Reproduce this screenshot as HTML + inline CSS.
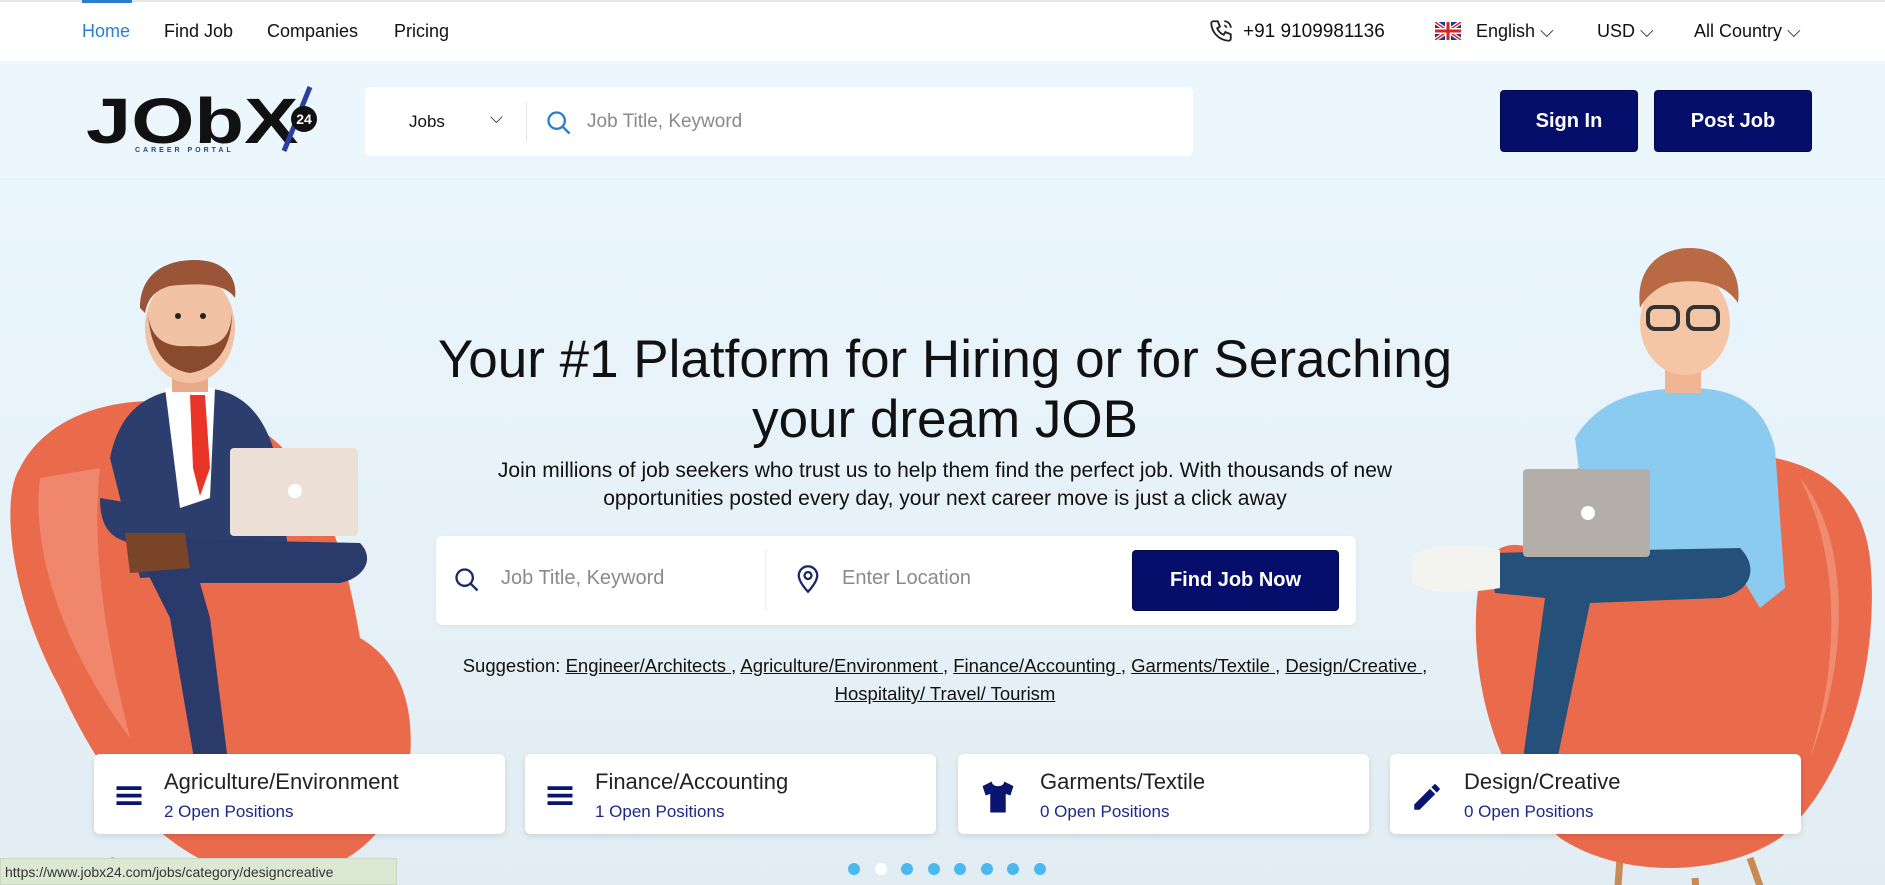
<!DOCTYPE html>
<html><head><meta charset="utf-8">
<style>
*{margin:0;padding:0;box-sizing:border-box}
html,body{overflow:hidden}
body{width:1885px;height:885px;font-family:"Liberation Sans",sans-serif;background:#eaf6fd;position:relative;color:#111}
.abs{position:absolute}
#top{left:0;top:0;width:1885px;height:61px;background:#fff;border-top:2px solid #e4e8e0}
.nav{top:21px;font-size:18px;color:#111}
#hdr{left:0;top:61px;width:1885px;height:119px;background:#ecf7fd;border-bottom:1px solid #e3eef5}
.btn{background:#050f6b;color:#fff;font-weight:bold;font-size:20px;border-radius:4px;display:flex;align-items:center;justify-content:center;border:1px solid #000a4a}
.card{top:754px;height:80px;width:411px;background:#fff;border-radius:6px;box-shadow:0 2px 6px rgba(0,0,0,.12)}
.card .t{position:absolute;left:70px;top:15px;font-size:22px;color:#222}
.card .s{position:absolute;left:70px;top:48px;font-size:17px;color:#1a2a8a}
.card svg{position:absolute;left:20px;top:26px}
.dot{top:863px;width:12px;height:12px;border-radius:50%;background:#4bb8ee}
u{text-decoration:underline}
</style></head><body>
<svg class="abs" style="left:0;top:180px" width="1885" height="705">
<defs>
<linearGradient id="fl" x1="0" y1="0" x2="0" y2="1"><stop offset="0" stop-color="#eaf6fd"/><stop offset="1" stop-color="#e2edf3"/></linearGradient>
</defs>
<rect width="1885" height="705" fill="url(#fl)"/>
<g transform="translate(0,58)">
<line x1="115" y1="620" x2="75" y2="760" stroke="#c98a55" stroke-width="7"/>
<line x1="180" y1="640" x2="165" y2="760" stroke="#c98a55" stroke-width="7"/>
<line x1="305" y1="630" x2="345" y2="760" stroke="#c98a55" stroke-width="7"/>
<path d="M20 230 C0 260 10 360 60 450 C110 560 170 620 250 640 C330 650 400 600 410 520 C415 460 395 420 360 400 C340 280 300 180 190 165 C110 155 45 180 20 230Z" fill="#ea6a4c"/>
<path d="M40 240 C30 320 70 420 130 500 C110 420 90 320 100 230Z" fill="#f49a80" opacity=".6"/>
<path d="M110 220 C120 170 150 150 200 150 C240 150 270 175 280 240 L290 330 L140 340 Z" fill="#2b3e6e"/>
<path d="M165 150 L215 150 L210 260 L180 270Z" fill="#fff"/>
<path d="M190 157 L205 157 L210 230 L200 258 L193 230Z" fill="#e93428"/>
<path d="M100 260 C100 300 120 310 170 305 L175 285 L130 265 Z" fill="#2b3e6e"/>
<path d="M130 300 L360 305 C375 320 365 340 340 345 L200 345 L210 380 L235 580 L205 585 L170 380 Z" fill="#2a3a6a"/>
<path d="M125 295 L185 295 L190 330 L130 335 Z" fill="#7a4428"/>
<rect x="230" y="210" width="128" height="88" rx="4" fill="#ece0d6"/>
<circle cx="295" cy="253" r="7" fill="#fff"/>
<rect x="172" y="112" width="36" height="42" fill="#e9a98b"/>
<ellipse cx="190" cy="90" rx="45" ry="55" fill="#f2c2a5"/>
<path d="M148 75 C150 105 160 130 190 135 C220 130 232 105 232 75 C230 105 215 110 190 108 C165 110 150 100 148 75Z" fill="#8a4a2e"/>
<path d="M140 70 C140 40 160 22 195 22 C225 22 238 40 235 60 C225 45 200 45 170 48 C155 52 148 60 145 75Z" fill="#9a5538"/>
<circle cx="178" cy="78" r="3" fill="#222"/><circle cx="203" cy="78" r="3" fill="#222"/>
</g>
<g transform="translate(0,58)">
<line x1="1620" y1="620" x2="1610" y2="760" stroke="#c98a55" stroke-width="7"/>
<line x1="1695" y1="640" x2="1705" y2="760" stroke="#c98a55" stroke-width="7"/>
<line x1="1750" y1="620" x2="1800" y2="760" stroke="#c98a55" stroke-width="7"/>
<path d="M1480 340 C1465 420 1490 540 1560 600 C1620 640 1720 640 1780 600 C1850 540 1880 420 1870 320 C1860 240 1800 215 1720 215 L1600 220 C1560 230 1550 270 1530 310 C1505 300 1485 315 1480 340Z" fill="#ea6a4c"/>
<path d="M1800 240 C1850 300 1850 420 1810 520 C1840 420 1840 320 1800 240Z" fill="#f49a80" opacity=".7"/>
<path d="M1575 200 C1600 160 1640 150 1690 150 C1740 150 1765 170 1775 210 L1785 350 L1760 370 L1730 320 L1590 320 Z" fill="#8ccbf0"/>
<path d="M1490 315 L1740 310 C1760 330 1750 355 1720 360 L1590 365 L1545 580 L1515 580 L1545 360 L1495 355Z" fill="#25507a"/>
<path d="M1412 318 C1430 305 1470 305 1500 312 L1500 350 C1470 355 1430 358 1412 345Z" fill="#f3f3f0"/>
<rect x="1523" y="231" width="127" height="88" rx="4" fill="#b4aea8"/>
<circle cx="1588" cy="275" r="7" fill="#fff"/>
<rect x="1665" y="110" width="36" height="45" fill="#f0b594"/>
<ellipse cx="1685" cy="85" rx="45" ry="52" fill="#f5c6a6"/>
<path d="M1640 70 C1635 30 1660 10 1690 10 C1725 10 1742 35 1738 65 C1725 45 1700 40 1670 45 C1655 50 1645 60 1640 70Z" fill="#b96a45"/>
<rect x="1648" y="69" width="30" height="22" rx="7" fill="none" stroke="#333" stroke-width="4"/>
<rect x="1688" y="69" width="30" height="22" rx="7" fill="none" stroke="#333" stroke-width="4"/>
</g>
</svg>

<div id="top" class="abs"></div>
<div class="abs" style="left:82px;top:0;width:50px;height:3px;background:#2a7ed0"></div>
<div class="abs nav" style="left:82px;color:#2a7ed0">Home</div>
<div class="abs nav" style="left:164px">Find Job</div>
<div class="abs nav" style="left:267px">Companies</div>
<div class="abs nav" style="left:394px">Pricing</div>
<svg class="abs" style="left:1208px;top:18px" width="26" height="26" viewBox="0 0 24 24" fill="none" stroke="#222" stroke-width="1.7"><path d="M5 3h4l2 5-2.5 1.5a11 11 0 0 0 6 6L16 13l5 2v4a2 2 0 0 1-2 2A17 17 0 0 1 3 5a2 2 0 0 1 2-2z"/><path d="M15 3a6 6 0 0 1 6 6M15 7a2 2 0 0 1 2 2"/></svg>
<div class="abs nav" style="left:1243px;font-size:19px">+91 9109981136</div>
<svg class="abs" style="left:1435px;top:22px" width="26" height="18" viewBox="0 0 26 18"><rect width="26" height="18" fill="#1b3b8a"/><path d="M0 0L26 18M26 0L0 18" stroke="#fff" stroke-width="4"/><path d="M0 0L26 18M26 0L0 18" stroke="#d22" stroke-width="1.5"/><path d="M13 0V18M0 9H26" stroke="#fff" stroke-width="6"/><path d="M13 0V18M0 9H26" stroke="#d22" stroke-width="3"/></svg>
<div class="abs nav" style="left:1476px">English ⌵</div>
<div class="abs nav" style="left:1597px">USD ⌵</div>
<div class="abs nav" style="left:1694px">All Country ⌵</div>

<div id="hdr" class="abs"></div>
<div class="abs" style="left:86px;top:89px;font-size:64px;font-weight:bold;color:#111;line-height:1;transform:scaleX(1.27);transform-origin:0 0">JObX</div>
<svg class="abs" style="left:270px;top:85px" width="52" height="70"><line x1="40" y1="2" x2="14" y2="66" stroke="#2a3fa0" stroke-width="5"/><circle cx="34" cy="34" r="13" fill="#111"/><text x="34" y="39" fill="#fff" font-size="14" font-weight="bold" text-anchor="middle" font-family="Liberation Sans">24</text></svg>
<div class="abs" style="left:135px;top:147px;font-size:7px;letter-spacing:3px;color:#2a3f8a;font-weight:bold">CAREER PORTAL</div>

<div class="abs" style="left:365px;top:87px;width:828px;height:69px;background:#fff;border-radius:5px"></div>
<div class="abs" style="left:409px;top:112px;font-size:17px">Jobs</div>
<div class="abs" style="left:490px;top:108px;font-size:17px">⌵</div>
<div class="abs" style="left:526px;top:102px;width:1px;height:40px;background:#e5e5e5"></div>
<svg class="abs" style="left:545px;top:109px" width="28" height="28" viewBox="0 0 24 24" fill="none" stroke="#2a7ed0" stroke-width="2"><circle cx="10" cy="10" r="7"/><path d="M15 15l6 6"/></svg>
<div class="abs" style="left:587px;top:111px;font-size:19px;color:#8a8a8a">Job Title, Keyword</div>
<div class="abs btn" style="left:1500px;top:90px;width:138px;height:62px">Sign In</div>
<div class="abs btn" style="left:1654px;top:90px;width:158px;height:62px">Post Job</div>

<div class="abs" style="left:245px;top:330px;width:1400px;text-align:center;font-size:53px;line-height:60px;color:#111">Your #1 Platform for Hiring or for Seraching<br>your dream JOB</div>
<div class="abs" style="left:345px;top:457px;width:1200px;text-align:center;font-size:21px;line-height:28px;color:#111">Join millions of job seekers who trust us to help them find the perfect job. With thousands of new<br>opportunities posted every day, your next career move is just a click away</div>

<div class="abs" style="left:436px;top:536px;width:920px;height:89px;background:#fff;border-radius:6px;box-shadow:0 1px 4px rgba(0,0,0,.06)"></div>
<svg class="abs" style="left:453px;top:566px" width="28" height="28" viewBox="0 0 24 24" fill="none" stroke="#1a2a6a" stroke-width="2"><circle cx="10" cy="10" r="7"/><path d="M15 15l6 6"/></svg>
<div class="abs" style="left:501px;top:567px;font-size:20px;color:#8a8a8a">Job Title, Keyword</div>
<div class="abs" style="left:765px;top:550px;width:1px;height:60px;background:#eee"></div>
<svg class="abs" style="left:794px;top:564px" width="28" height="30" viewBox="0 0 24 26" fill="none" stroke="#1a2a6a" stroke-width="2"><path d="M12 24s-8-8-8-14a8 8 0 0 1 16 0c0 6-8 14-8 14z"/><circle cx="12" cy="10" r="3"/></svg>
<div class="abs" style="left:842px;top:567px;font-size:20px;color:#8a8a8a">Enter Location</div>
<div class="abs btn" style="left:1132px;top:550px;width:207px;height:61px;font-size:20px">Find Job Now</div>

<div class="abs" style="left:295px;top:652px;width:1300px;text-align:center;font-size:18.5px;line-height:28px;color:#111">Suggestion: <u>Engineer/Architects </u>, <u>Agriculture/Environment </u>, <u>Finance/Accounting </u>, <u>Garments/Textile </u>, <u>Design/Creative </u>,<br><u>Hospitality/ Travel/ Tourism</u></div>

<div class="abs card" style="left:94px"><svg width="30" height="30" viewBox="0 0 24 24" fill="#0a1570"><rect x="2" y="5" width="20" height="3"/><rect x="2" y="11" width="20" height="3"/><rect x="2" y="17" width="20" height="3"/></svg><div class="t">Agriculture/Environment</div><div class="s">2 Open Positions</div></div>
<div class="abs card" style="left:525px"><svg width="30" height="30" viewBox="0 0 24 24" fill="#0a1570"><rect x="2" y="5" width="20" height="3"/><rect x="2" y="11" width="20" height="3"/><rect x="2" y="17" width="20" height="3"/></svg><div class="t">Finance/Accounting</div><div class="s">1 Open Positions</div></div>
<div class="abs card" style="left:958px"><svg width="40" height="34" viewBox="0 0 24 22" fill="#0a1570"><path d="M8 1L2 4l2 6 3-1v12h10V9l3 1 2-6-6-3c0 2-2 3-4 3S8 3 8 1z"/></svg><div class="t" style="left:82px">Garments/Textile</div><div class="s" style="left:82px">0 Open Positions</div></div>
<div class="abs card" style="left:1390px"><svg width="34" height="34" viewBox="0 0 24 24" fill="#0a1570"><path d="M3 17.25V21h3.75L17.8 9.94l-3.75-3.75L3 17.25zM20.7 7.04a1 1 0 0 0 0-1.41l-2.34-2.34a1 1 0 0 0-1.41 0l-1.830 1.83 3.75 3.75 1.83-1.83z"/></svg><div class="t" style="left:74px">Design/Creative</div><div class="s" style="left:74px">0 Open Positions</div></div>

<div class="abs dot" style="left:848px"></div>
<div class="abs dot" style="left:875px;background:#fff"></div>
<div class="abs dot" style="left:901px"></div>
<div class="abs dot" style="left:928px"></div>
<div class="abs dot" style="left:954px"></div>
<div class="abs dot" style="left:981px"></div>
<div class="abs dot" style="left:1007px"></div>
<div class="abs dot" style="left:1034px"></div>

<div class="abs" style="left:0;top:858px;width:397px;height:27px;background:#dbe9d4;border:1px solid #c9d8c2;font-size:14px;padding:5px 4px;color:#333">https://www.jobx24.com/jobs/category/designcreative</div>
</body></html>
